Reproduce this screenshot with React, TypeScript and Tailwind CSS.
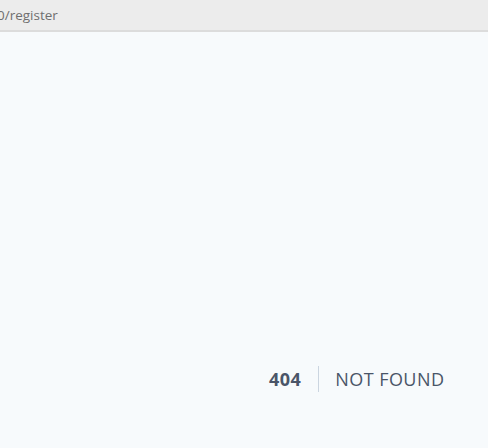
export default function App() {
  return (
    <div className="h-[448px] w-[488px] flex flex-col overflow-hidden" style={{ fontFamily: '"Open Sans", "Noto Sans", sans-serif' }}>
      <div className="h-[30px] shrink-0 bg-[#ececec] flex items-center">
        <span className="ml-[-3px] text-[13.5px] text-[#6f6f6f]">0/register</span>
      </div>
      <div className="h-[2px] shrink-0 bg-[#dcdcdc]" />
      <main className="flex-1 bg-[#f7fafc] pt-[334px] pl-[269px]">
        <div className="flex items-center">
          <div className="pr-[17px] text-lg font-bold text-[#4a5568] tracking-wide border-r border-[#cbd5e0] leading-[26px]">404</div>
          <div className="ml-4 text-lg text-[#4a5568] uppercase tracking-[0.025em] leading-[26px]">Not Found</div>
        </div>
      </main>
    </div>
  )
}
